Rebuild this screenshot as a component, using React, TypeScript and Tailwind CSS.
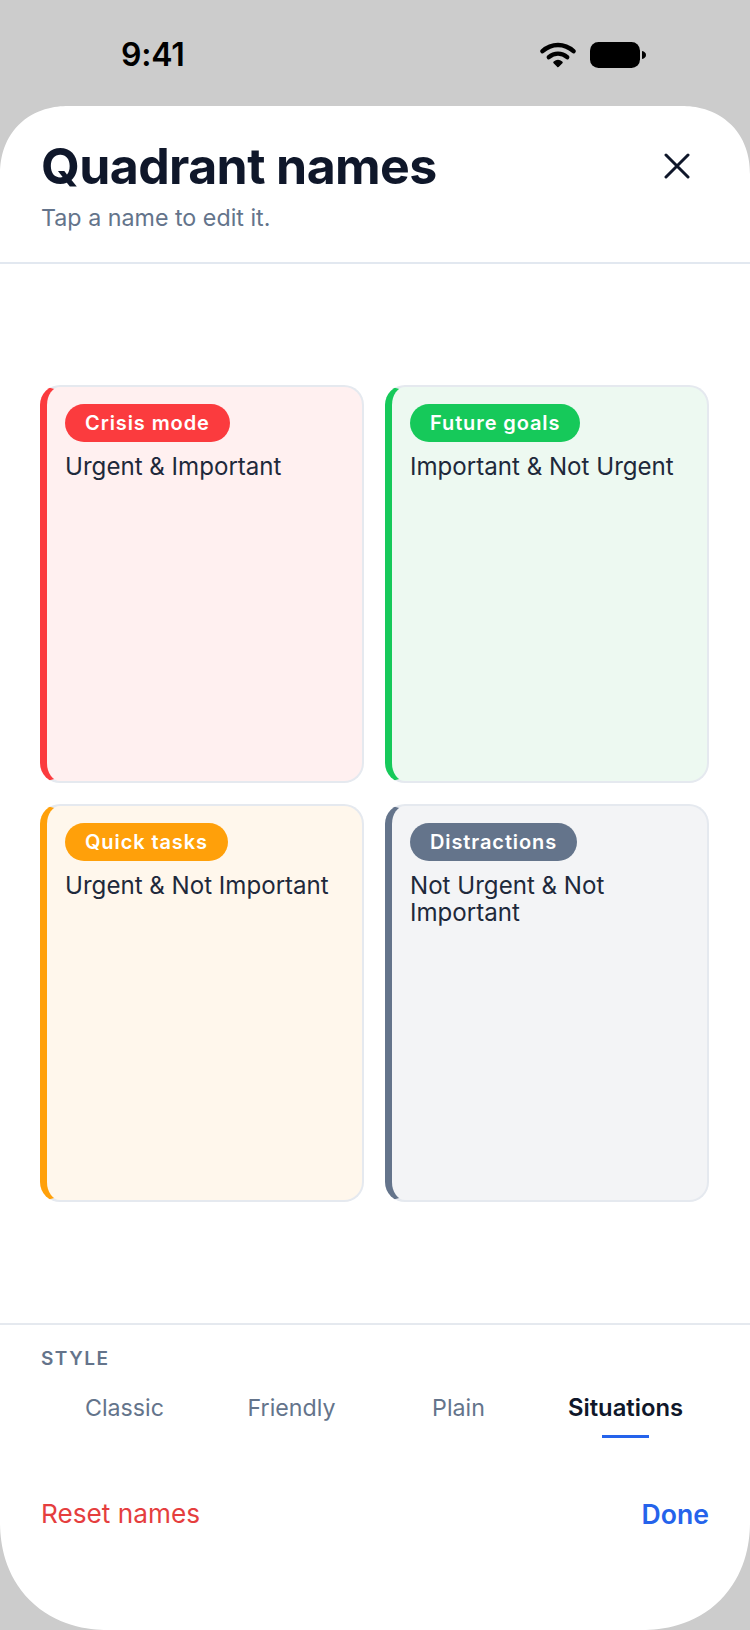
const font = { fontFamily: "Inter, 'Noto Sans', sans-serif" };

const cards = [
  { pill: "Crisis mode", text: "Urgent & Important", bg: "bg-[#fff0f0]", edge: "border-l-[#fb3b3e]", pillBg: "bg-[#fb3b3e]" },
  { pill: "Future goals", text: "Important & Not Urgent", bg: "bg-[#edf9f1]", edge: "border-l-[#16c95a]", pillBg: "bg-[#16c95a]" },
  { pill: "Quick tasks", text: "Urgent & Not Important", bg: "bg-[#fff7ec]", edge: "border-l-[#ffa00a]", pillBg: "bg-[#ffa00a]" },
  { pill: "Distractions", text: "Not Urgent & Not Important", bg: "bg-[#f3f4f6]", edge: "border-l-[#64748b]", pillBg: "bg-[#64748b]" },
];

const tabs = ["Classic", "Friendly", "Plain", "Situations"];

function StatusBar() {
  return (
    <div className="h-[106px] shrink-0 flex items-start justify-between pl-[121px] pr-[104px] pt-[36px]">
      <span className="text-[32px] leading-[38px] font-semibold text-black tracking-[-0.2px]">9:41</span>
      <div className="flex items-center gap-[14px] pt-[6px]">
        <svg width="36" height="26" viewBox="0 0 36 26" fill="none" stroke="#000" strokeWidth="4.4" strokeLinecap="round">
          <path d="M2.5 9.2C11.5 1 24.5 1 33.5 9.2" />
          <path d="M8.8 15.2C14.2 10.4 21.8 10.4 27.2 15.2" />
          <path d="M14.5 20.4C16.6 18.8 19.4 18.8 21.5 20.4L18 24Z" fill="#000" strokeWidth="2.5" strokeLinejoin="round" />
        </svg>
        <svg width="56" height="26" viewBox="0 0 56 26" fill="#000">
          <rect x="0" y="0" width="50" height="26" rx="8.5" />
          <path d="M52 9C54.5 9.6 56 11 56 13C56 15 54.5 16.4 52 17Z" />
        </svg>
      </div>
    </div>
  );
}

export default function App() {
  return (
    <div className="w-[750px] h-[1630px] bg-[#cccccc] flex flex-col overflow-hidden" style={font}>
      <StatusBar />
      <div className="flex-1 flex flex-col bg-white rounded-t-[68px] rounded-b-[108px] [corner-shape:superellipse(1.1)]">
        <div className="h-[158px] shrink-0 border-b-2 border-[#e2e8f0] pl-[41px] pr-[60px] pt-[31px] flex justify-between items-start">
          <div>
            <h1 className="text-[50px] leading-[58px] font-bold text-[#0f172a] tracking-[-0.6px]">Quadrant names</h1>
            <p className="text-[23.25px] leading-[30px] text-[#64748b] mt-[8px]">Tap a name to edit it.</p>
          </div>
          <svg className="mt-[16px]" width="26" height="26" viewBox="0 0 26 26" fill="none" stroke="#0f172a" strokeWidth="3" strokeLinecap="round">
            <path d="M2 2L24 24M24 2L2 24" />
          </svg>
        </div>

        <div className="flex-1 flex items-center pl-[40px] pr-[41px]">
          <div className="w-full grid grid-cols-2 grid-rows-[398px_398px] gap-[21px]">
            {cards.map((c) => (
              <div key={c.pill} className={`rounded-[20px] border-2 border-[#e5e9ef] border-l-[7px] pl-[18px] pt-[17px] pr-[20px] ${c.bg} ${c.edge}`}>
                <span className={`inline-flex h-[38px] items-center rounded-full px-[20px] text-[20px] font-semibold text-white tracking-[0.9px] ${c.pillBg}`}>
                  {c.pill}
                </span>
                <p className="mt-[11px] text-[24.1px] leading-[27px] text-[#1e293b]">{c.text}</p>
              </div>
            ))}
          </div>
        </div>

        <div className="h-[307px] shrink-0 border-t-2 border-[#e5e9ef] px-[41px] pt-[22px]">
          <div className="text-[19px] leading-[24px] font-semibold text-[#64748b] tracking-[1.5px]">STYLE</div>
          <div className="grid grid-cols-4 mt-[22px]">
            {tabs.map((t) => {
              const active = t === "Situations";
              return (
                <div key={t} className="flex flex-col items-center">
                  <span className={`leading-[30px] ${active ? "text-[23.8px] font-semibold text-[#0f172a]" : "text-[23.2px] text-[#64748b]"}`}>{t}</span>
                  <div className={`mt-[12px] h-[3px] w-[47px] ${active ? "bg-[#2563eb]" : ""}`} />
                </div>
              );
            })}
          </div>
          <div className="flex justify-between items-center mt-[60px]">
            <span className="text-[26.2px] leading-[32px] text-[#e53e3e]">Reset names</span>
            <span className="text-[26.6px] leading-[32px] font-semibold text-[#2563eb]">Done</span>
          </div>
        </div>
      </div>
    </div>
  );
}
